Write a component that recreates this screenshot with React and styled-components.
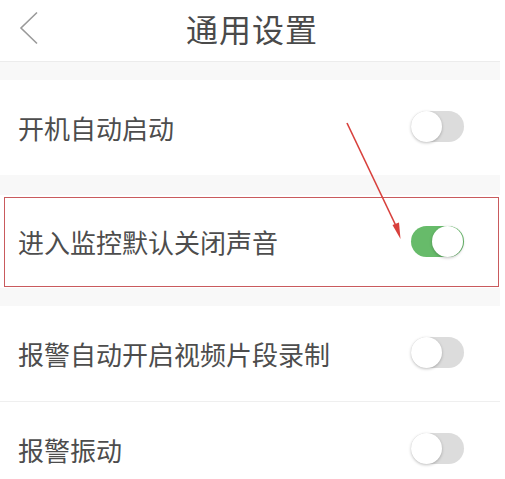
import React from "react";
import styled, { createGlobalStyle } from "styled-components";

const GlobalStyle = createGlobalStyle`
  html, body {
    margin: 0;
    padding: 0;
    background: #fff;
  }
  body {
    font-family: "Noto Sans CJK SC", "Noto Sans", sans-serif;
  }
`;

const Page = styled.div`
  position: relative;
  width: 500px;
  height: 479px;
  overflow: hidden;
  background: #f8f8f8;
`;

const Header = styled.header`
  display: grid;
  grid-template-columns: 60px 1fr 60px;
  align-items: center;
  height: 62px;
  padding-bottom: 6px;
  box-sizing: border-box;
  background: #fff;
  border-bottom: 1px solid #ececec;
`;

const Back = styled.button`
  display: flex;
  align-items: center;
  justify-content: flex-start;
  height: 100%;
  padding: 0 0 0 19px;
  margin: 0;
  border: 0;
  background: none;
`;

const Title = styled.h1`
  margin: 0;
  text-align: center;
  font-size: 32px;
  font-weight: 400;
  color: #4a4a4a;
  letter-spacing: 1px;
  line-height: 1;
  padding-left: 4px;
`;

const Group = styled.section`
  margin-top: ${(p) => p.gap}px;
  background: #fff;
`;

const Row = styled.div`
  position: relative;
  display: flex;
  align-items: center;
  justify-content: space-between;
  height: ${(p) => p.h || 95}px;
  padding: 0 36px 0 18px;
  border-top: ${(p) => (p.divided ? "1px solid #efefef" : "none")};

  ${(p) =>
    p.highlight &&
    `
    &::after {
      content: "";
      position: absolute;
      top: 2px;
      left: 4px;
      right: 1px;
      bottom: 1px;
      border: 1.5px solid #c95a5d;
      pointer-events: none;
    }
  `}
`;

const Label = styled.span`
  font-size: 26px;
  color: #4d4d4d;
  line-height: 1;
`;

const Switch = styled.span`
  position: relative;
  display: inline-block;
  width: 53px;
  height: 31px;
  border-radius: 16px;
  background: ${(p) => (p.on ? "#67bb6a" : "#dcdcdc")};
  margin-top: ${(p) => (p.on ? "0" : "-2px")};

  &::before {
    content: "";
    position: absolute;
    top: 0;
    left: ${(p) => (p.on ? "21px" : "0")};
    width: 31px;
    height: 31px;
    border-radius: 50%;
    background: #fff;
    box-shadow: 0 1px 3px rgba(0, 0, 0, 0.25);
  }
`;

const Arrow = styled.svg`
  position: absolute;
  left: 0;
  top: 0;
  pointer-events: none;
`;

const Chevron = () => (
  <svg width="20" height="34" viewBox="0 0 20 34">
    <path d="M18 1.5 L2 17 L18 32.5" fill="none" stroke="#9a9a9a" strokeWidth="1.6" />
  </svg>
);

export default function App() {
  return (
    <>
      <GlobalStyle />
      <Page>
        <Header>
          <Back aria-label="返回">
            <Chevron />
          </Back>
          <Title>通用设置</Title>
          <span />
        </Header>

        <Group gap={18}>
          <Row>
            <Label>开机自动启动</Label>
            <Switch />
          </Row>
        </Group>

        <Group gap={20}>
          <Row highlight h={93}>
            <Label>进入监控默认关闭声音</Label>
            <Switch on />
          </Row>
        </Group>

        <Group gap={18}>
          <Row>
            <Label>报警自动开启视频片段录制</Label>
            <Switch />
          </Row>
          <Row divided>
            <Label>报警振动</Label>
            <Switch />
          </Row>
        </Group>

        <Arrow width="500" height="479" viewBox="0 0 500 479">
          <line x1="347" y1="123" x2="397" y2="228" stroke="#d8403c" strokeWidth="1.6" />
          <path d="M400.5 239 L392.5 225 L399 222.5 Z" fill="#d8403c" />
        </Arrow>
      </Page>
    </>
  );
}
